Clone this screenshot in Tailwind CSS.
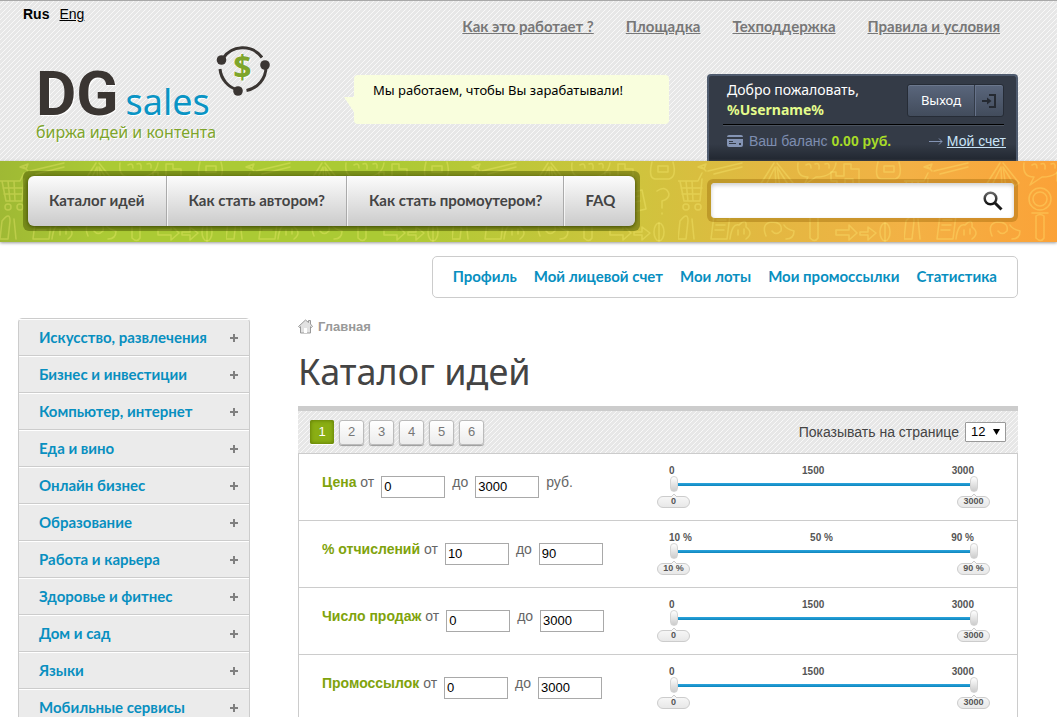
<!DOCTYPE html>
<html lang="ru">
<head>
<meta charset="utf-8">
<title>DG sales — Каталог идей</title>
<meta name="viewport" content="width=device-width, initial-scale=1">
<script src="https://cdn.jsdelivr.net/npm/@tailwindcss/browser@4"></script>
</head>
<body class="bg-white font-['Liberation_Sans',Arial,sans-serif] text-sm text-[#555]">

<header class="border-t border-[#a8a8a8] bg-[linear-gradient(135deg,#e7e7e7_38%,#f8f8f8_38%_50%,#e7e7e7_50%_88%,#f8f8f8_88%)] bg-[length:5px_5px]">
  <div class="flex h-40 max-w-[1018px] justify-between">
    <!-- language and logo -->
    <div class="w-[300px] shrink-0 pt-1">
      <div class="flex gap-[10px] pl-[23px] text-[14px] leading-[18px] text-black">
        <strong>Rus</strong><a href="#" class="underline">Eng</a>
      </div>
      <a href="#" class="mt-[21px] flex pl-[36px] [text-shadow:1px_1px_0_#fff]">
        <span>
          <span class="flex items-baseline gap-[7px] pt-[27px] leading-[45px]">
            <span class="font-[Roboto,sans-serif] text-[62px] font-bold text-[#3a3532]">DG</span>
            <span class="font-['Noto_Sans',sans-serif] text-[36px] text-[#0a94c4]">sales</span>
          </span>
          <span class="block font-['Noto_Sans',sans-serif] text-[16px] leading-[16px] whitespace-nowrap text-[#7ea52b]">биржа идей и контента</span>
        </span>
        <svg class="size-[54px]" viewBox="0 0 54 54" fill="none" aria-hidden="true">
          <g stroke="#3a3532" stroke-width="3">
            <path d="M6.500 15A24 24 0 0 1 46 13.500"/>
            <path d="M50 23A24 24 0 0 1 30.500 46.500"/>
            <path d="M22 46A24 24 0 0 1 4 25"/>
          </g>
          <g fill="#3a3532"><circle cx="5.500" cy="16" r="4.800"/><circle cx="49" cy="21" r="4.800"/><circle cx="22" cy="47" r="4.800"/></g>
          <text x="26.500" y="35" text-anchor="middle" font-family="Noto Sans, sans-serif" font-weight="700" font-size="32" fill="#7ea52b">$</text>
        </svg>
      </a>
    </div>

    <div class="flex-1 pl-[54px]">
      <nav class="flex justify-end gap-[32px] pt-[14px] pr-[18px] font-[Lato,sans-serif] text-[15px] leading-[22px] font-bold whitespace-nowrap text-[#777]">
        <a href="#" class="underline">Как это работает ?</a>
        <a href="#" class="underline">Площадка</a>
        <a href="#" class="underline">Техподдержка</a>
        <a href="#" class="underline">Правила и условия</a>
      </nav>
      <div class="mt-[37px] flex items-start justify-between">
        <div class="relative mt-[1px] h-[49px] w-[315px] rounded bg-[#f9fedd] pt-[5px] pl-[19px] font-['Noto_Sans',sans-serif] text-[13px] leading-[20px] whitespace-nowrap text-black">
          Мы работаем, чтобы Вы зарабатывали!
          <svg class="absolute top-[22px] -left-[10px] h-[15px] w-[10px]" viewBox="0 0 10 15" aria-hidden="true"><path d="M0 0H10V15Z" fill="#f9fedd"/></svg>
        </div>
        <section class="h-[87px] w-[311px] rounded-t border-x-2 border-t-2 border-[#4f5b6e] bg-[linear-gradient(#343b47_80%,#20262f)]">
          <div class="mr-[12px] ml-[14px] flex h-[49px] justify-between border-b border-black shadow-[0_1px_0_#4b535f]">
            <div class="pt-[4px] pl-[4px] font-['Noto_Sans',sans-serif] text-[14px] leading-[20px] text-white">
              Добро пожаловать,<br><b class="text-[#e4fb8c]">%Username%</b>
            </div>
            <button type="button" class="mt-[8px] flex h-[33px] w-[97px] items-center rounded-[3px] border border-[#262c36] bg-linear-to-b from-[#5a667c] to-[#424c5c] font-['Noto_Sans',sans-serif] text-[13px] text-white shadow-[inset_0_1px_0_#6c788d]">
              <span class="flex-1">Выход</span>
              <span class="flex h-full w-[29px] items-center justify-center border-l border-[#333b48] shadow-[inset_1px_0_0_#66728a]">
                <svg class="size-4" viewBox="0 0 16 16" fill="none" stroke="#252a32" stroke-width="2" aria-hidden="true"><path d="M8 2H14V14H8M1 8H9"/><path d="M6 4.500V11.500L10.500 8Z" fill="#252a32" stroke="none"/></svg>
              </span>
            </button>
          </div>
          <div class="flex items-center pt-[6px] pr-[10px] pl-[18px] text-[14px] leading-[20px]">
            <svg class="mr-[6px] h-[14px] w-[16px]" viewBox="0 0 16 14" aria-hidden="true"><path fill="#8494b4" fill-rule="evenodd" d="M2 1H14Q16 1 16 3H0Q0 1 2 1ZM0 5H16V11Q16 13 14 13H2Q0 13 0 11ZM2 7V8H6V7ZM2 9V10H9V9ZM12 9V11H14V9Z"/></svg>
            <span class="text-[#7d8db0]">Ваш баланс</span>
            <b class="ml-[4px] text-[#a8dc28]">0.00 руб.</b>
            <svg class="ml-auto h-[8px] w-[14px]" viewBox="0 0 14 8" fill="none" stroke="#8494b4" aria-hidden="true"><path d="M0 4.500H13M10 1.500L13 4.500L10 7.500"/></svg>
            <a href="#" class="ml-[4px] text-[#c9e4f7] underline">Мой счет</a>
          </div>
        </section>
      </div>
    </div>
  </div>
</header>

<div class="relative h-[81px] bg-[linear-gradient(90deg,#9fb934,#abca34_10%,#abca34_36%,#cfc43d_60%,#e2b841_72%,#f3b145_86%,#fba238)] shadow-[0_1px_3px_#999]">
  <svg class="absolute inset-0 size-full" aria-hidden="true">
    <defs>
      <pattern id="doodles" width="226" height="81" patternUnits="userSpaceOnUse">
        <g fill="none" stroke="#fff57a" stroke-opacity=".3" stroke-width="1.500" stroke-linecap="round" stroke-linejoin="round">
          <path d="M20 6l8-3-2 5zM30 10l34-8M36 13l28-7M24 6l4 4"/>
          <path d="M0 20h20l4-8M2 20l4 20h16l2-22M8 20l2 20M14 20l1 20M3 27h21M4 33h19"/><circle cx="8" cy="46" r="3"/><circle cx="20" cy="46" r="3"/>
          <path d="M96 2L82 24l5 2L97 6l1 20h4L99 6l12 19 4-3L99 2"/>
          <path d="M120 2q-2 14 10 14l-4 8 12-8q18 0 20-14M128 4q5-3 5 3M137 3q5-2 4 5M147 3q5-2 4 4"/>
          <path d="M166 3v12h-8v-4h-5v9h6v6h8v-8h8v8h6V8h-8V3z"/>
          <path d="M200 1q-4 16 3 17h14q8-2 4-17M206 5h10v6h-10z"/>
          <path d="M2 60q8-10 8 0l-2 18H0zM14 58l2 20M36 54h16l-3 24H33zM39 59h9M38 64h9M37 69h9"/>
          <path d="M52 78q2-16 9-14 8-8 7 2 8 6 0 12M60 69v5M66 68v5"/>
          <path d="M88 75q-5-12 5-14 12 0 10 9-5 5-9 0M108 78q8 0 8-8-8-2-10-6"/>
          <path d="M132 55v22q5 5 8 0V55q-4-3-8 0M128 52h16"/><circle cx="136" cy="38" r="11"/><circle cx="136" cy="38" r="7"/>
          <path d="M158 69h13v-5l8 8-8 7v-5h-13zM182 71h8v-5l8 6-8 7v-5h-8z"/>
          <ellipse cx="207" cy="71" rx="5" ry="9"/><path d="M207 62v18"/>
          <path d="M44 30q-8 8-3 16 8 6 15-2l-5-3q-7 2-6-5t9-4l4-5q-8-5-14 3"/>
          <path d="M72 52V34M68 39l4-6 4 6M168 34l22-5 4 19-22 5zM173 38l14-3M174 43l14-3"/>
          <path d="M205 30q9-6 12 3 0 5-7 7v7M210 52v1"/>
        </g>
      </pattern>
    </defs>
    <rect width="100%" height="100%" fill="url(#doodles)"/>
  </svg>
  <div class="relative flex max-w-[1018px] items-start justify-between pt-[10px] pl-[23px]">
    <nav class="rounded-md bg-[#4c5a00]/50 p-[5px]">
      <div class="flex h-[50px] overflow-hidden rounded-md bg-linear-to-b from-[#fcfcfc] to-[#cbcbcb] font-[Lato,sans-serif] text-[15px] leading-[48px] font-bold whitespace-nowrap text-[#444] shadow-[0_1px_4px_#3b4600]">
        <a href="#" class="border-r border-[#aaa] px-[21px]">Каталог идей</a>
        <a href="#" class="border-r border-l border-r-[#aaa] border-l-white/70 px-[21px]">Как стать автором?</a>
        <a href="#" class="border-r border-l border-r-[#aaa] border-l-white/70 px-[21px]">Как стать промоутером?</a>
        <a href="#" class="border-l border-white/70 px-[20px]">FAQ</a>
      </div>
    </nav>
    <form class="mt-[8px] flex w-[311px] rounded-md bg-[#8c5a00]/35 p-1" onsubmit="return false">
      <div class="flex h-[35px] flex-1 items-center rounded bg-white shadow-[inset_0_2px_4px_#ccc]">
        <input type="search" aria-label="Поиск" class="h-full min-w-0 flex-1 px-3 outline-none">
        <button type="submit" aria-label="Найти" class="px-[11px]">
          <svg class="size-[20px]" viewBox="0 0 20 20" fill="none" aria-hidden="true"><defs><linearGradient id="lens" x2="0" y2="1"><stop stop-color="#666"/><stop offset="1" stop-color="#111"/></linearGradient></defs><circle cx="7.500" cy="7.500" r="5.800" stroke="url(#lens)" stroke-width="2.500"/><path d="M12 12L18.500 18.500" stroke="#1a1a1a" stroke-width="3"/></svg>
        </button>
      </div>
    </form>
  </div>
</div>

<div class="max-w-[1018px] pt-[14px] pl-[18px]">
  <nav class="ml-auto flex h-[42px] w-fit items-center gap-[17px] rounded-[5px] border border-[#ccc] px-[20px] font-[Lato,sans-serif] text-[15px] font-bold whitespace-nowrap text-[#088fc0]">
    <a href="#">Профиль</a><a href="#">Мой лицевой счет</a><a href="#">Мои лоты</a><a href="#">Мои промоссылки</a><a href="#">Статистика</a>
  </nav>

  <div class="mt-[20px] flex items-start gap-[48px]">
    <nav class="w-[232px] shrink-0 rounded-t border border-[#ccc] bg-[#ebebeb] font-[Lato,sans-serif] text-[15px] leading-[35px] font-bold whitespace-nowrap text-[#088fc0]">
      <ul id="categories"></ul>
    </nav>

    <main class="min-w-0 flex-1">
      <a href="#" class="flex items-center gap-[5px] text-[13px] leading-[17px] font-bold text-[#999]">
        <svg class="size-[15px]" viewBox="0 0 15 15" aria-hidden="true"><path d="M10.500 1.500H12.500V5L14.500 7.500 13.500 8.500 12.500 7.700V14H2.500V7.700L1.500 8.500.5 7.500 7.500 1 10.500 3.500Z" fill="#e2e2e2" stroke="#999"/><path d="M6 9H9V14H6Z" fill="#fff"/></svg>
        Главная
      </a>
      <h1 class="pt-[15px] pb-[13px] font-['Noto_Sans',sans-serif] text-[36px] leading-[43px] text-[#444]">Каталог идей</h1>

      <div class="flex h-[48px] items-center justify-between border-t-5 border-b border-[#ccc] bg-[linear-gradient(135deg,#e7e7e7_38%,#f8f8f8_38%_50%,#e7e7e7_50%_88%,#f8f8f8_88%)] bg-[length:5px_5px] pr-[12px] pl-[12px]">
        <div class="flex items-center gap-[5px] text-[13px] text-[#777]">
          <button type="button" aria-current="page" class="size-[24px] rounded-[2px] bg-[#8aae14] text-white shadow-[inset_0_0_4px_#566f00,0_1px_0_#fff]">1</button>
          <button type="button" class="size-[25px] rounded-[3px] border border-[#bbb] bg-linear-to-b from-white to-[#ececec] shadow-[0_1px_1px_#999]">2</button>
          <button type="button" class="size-[25px] rounded-[3px] border border-[#bbb] bg-linear-to-b from-white to-[#ececec] shadow-[0_1px_1px_#999]">3</button>
          <button type="button" class="size-[25px] rounded-[3px] border border-[#bbb] bg-linear-to-b from-white to-[#ececec] shadow-[0_1px_1px_#999]">4</button>
          <button type="button" class="size-[25px] rounded-[3px] border border-[#bbb] bg-linear-to-b from-white to-[#ececec] shadow-[0_1px_1px_#999]">5</button>
          <button type="button" class="size-[25px] rounded-[3px] border border-[#bbb] bg-linear-to-b from-white to-[#ececec] shadow-[0_1px_1px_#999]">6</button>
        </div>
        <label class="flex items-center gap-[6px] text-[14px] text-[#444]">Показывать на странице
          <span class="relative">
            <select class="block h-[20px] w-[41px] appearance-none rounded-[1px] border border-[#999] bg-white pl-[5px] text-[13px] leading-[18px] text-black"><option>12</option><option>24</option><option>48</option></select>
            <svg class="pointer-events-none absolute top-[7px] right-[6px] h-[6px] w-[7px]" viewBox="0 0 7 6" aria-hidden="true"><path d="M0 0H7L3.500 6Z"/></svg>
          </span>
        </label>
      </div>
      <div id="filters" class="border-x border-[#ccc]"></div>
    </main>
  </div>
</div>

<script>
const categories = ['Искусство, развлечения', 'Бизнес и инвестиции', 'Компьютер, интернет', 'Еда и вино', 'Онлайн бизнес', 'Образование', 'Работа и карьера', 'Здоровье и фитнес', 'Дом и сад', 'Языки', 'Мобильные сервисы'];
document.getElementById('categories').innerHTML = categories.map(name => `
  <li class="border-t border-b border-t-white border-b-[#ccc]">
    <a href="#" class="flex items-center justify-between pr-[11px] pl-[20px]">${name}
      <svg class="size-[8px]" viewBox="0 0 8 8" aria-hidden="true"><path d="M3 0H5V3H8V5H5V8H3V5H0V3H3Z" fill="#808080"/></svg>
    </a>
  </li>`).join('');

const filters = [
  { name: 'Цена', min: 0, mid: 1500, max: 3000, unit: '', suffix: 'руб.' },
  { name: '% отчислений', min: 10, mid: 50, max: 90, unit: ' %', suffix: '' },
  { name: 'Число продаж', min: 0, mid: 1500, max: 3000, unit: '', suffix: '' },
  { name: 'Промоссылок', min: 0, mid: 1500, max: 3000, unit: '', suffix: '' },
];
const field = 'mt-[10px] h-[22px] w-[64px] border border-[#a9a9a9] bg-white pl-[2px] text-[13px] text-black';
const range = 'pointer-events-none absolute inset-0 h-4 w-full appearance-none bg-transparent [&::-webkit-slider-thumb]:pointer-events-auto [&::-webkit-slider-thumb]:h-[16px] [&::-webkit-slider-thumb]:w-[8px] [&::-webkit-slider-thumb]:appearance-none [&::-webkit-slider-thumb]:rounded-full [&::-webkit-slider-thumb]:border [&::-webkit-slider-thumb]:border-[#d4d4d4] [&::-webkit-slider-thumb]:bg-linear-to-b [&::-webkit-slider-thumb]:from-white [&::-webkit-slider-thumb]:to-[#ccc]';
const bubble = 'relative h-[12px] w-[33px] rounded-full border border-[#ccc] bg-linear-to-b from-[#f6f6f6] to-[#e8e8e8] text-center text-[9px] leading-[9px]';
const notch = '<svg class="absolute -top-[3px] left-[13px] h-[3px] w-[6px]" viewBox="0 0 6 3" aria-hidden="true"><path d="M0 3L3 0L6 3" fill="#f6f6f6" stroke="#ccc"/></svg>';
document.getElementById('filters').innerHTML = filters.map((f, i) => `
  <div class="flex h-[67px] items-start justify-between border-b border-[#ccc] pr-[27px] pl-[23px]">
    <div class="flex gap-[7px] pt-[12px] text-[14px] leading-[32px] text-[#666]">
      <label for="from${i}"><b class="text-[#7fa30c]">${f.name}</b> от</label>
      <input id="from${i}" class="${field}" value="${f.min}">
      <label for="to${i}">до</label>
      <input id="to${i}" class="${field}" value="${f.max}">
      <span>${f.suffix}</span>
    </div>
    <div class="w-[333px] pt-[11px] font-bold text-[#555]">
      <div class="flex justify-between pr-[16px] pl-[12px] text-[10px] leading-[11px]">
        <span>${f.min}${f.unit}</span><span>${f.mid}${f.unit}</span><span>${f.max}${f.unit}</span>
      </div>
      <div class="relative mr-[12px] ml-[13px] h-[16px] px-[4px] pt-[7px]">
        <div class="h-[3px] bg-linear-to-b from-[#2ba5de] to-[#0c86bd]"></div>
        <input type="range" aria-label="${f.name} от" class="${range}" min="${f.min}" max="${f.max}" value="${f.min}">
        <input type="range" aria-label="${f.name} до" class="${range}" min="${f.min}" max="${f.max}" value="${f.max}">
      </div>
      <div class="flex justify-between pt-[4px]">
        <div class="${bubble}">${notch}<span class="relative">${f.min}${f.unit}</span></div>
        <div class="${bubble}">${notch}<span class="relative">${f.max}${f.unit}</span></div>
      </div>
    </div>
  </div>`).join('');
</script>
</body>
</html>
